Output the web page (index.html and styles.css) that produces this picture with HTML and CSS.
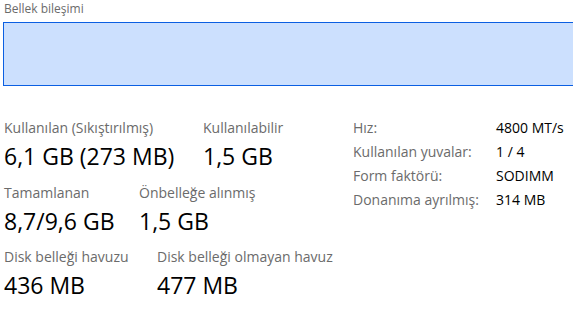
FILE: index.html
```html
<!DOCTYPE html>
<html lang="tr">
<head>
<meta charset="utf-8">
<link rel="stylesheet" href="styles.css">
</head>
<body>
<div class="page">
  <div class="title">Bellek bileşimi</div>
  <div class="bar"></div>
  <div class="details">
    <div class="stats">
      <div class="row">
        <div class="stat c1a"><div class="lbl">Kullanılan (Sıkıştırılmış)</div><div class="val">6,1 GB (273 MB)</div></div>
        <div class="stat"><div class="lbl">Kullanılabilir</div><div class="val">1,5 GB</div></div>
      </div>
      <div class="row">
        <div class="stat c2a"><div class="lbl">Tamamlanan</div><div class="val">8,7/9,6 GB</div></div>
        <div class="stat"><div class="lbl">Önbelleğe alınmış</div><div class="val">1,5 GB</div></div>
      </div>
      <div class="row">
        <div class="stat c3a"><div class="lbl">Disk belleği havuzu</div><div class="val">436 MB</div></div>
        <div class="stat"><div class="lbl">Disk belleği olmayan havuz</div><div class="val">477 MB</div></div>
      </div>
    </div>
    <div class="specs">
      <div class="k">Hız:</div><div class="v">4800 MT/s</div>
      <div class="k">Kullanılan yuvalar:</div><div class="v">1 / 4</div>
      <div class="k">Form faktörü:</div><div class="v">SODIMM</div>
      <div class="k">Donanıma ayrılmış:</div><div class="v">314 MB</div>
    </div>
  </div>
</div>
</body>
</html>
```
FILE: styles.css
```css
html, body {
  margin: 0;
  padding: 0;
  background: #ffffff;
  overflow: hidden;
}
.page {
  width: 573px;
  height: 312px;
  font-family: "Open Sans", "Noto Sans", sans-serif;
  overflow: hidden;
}
.title {
  font-size: 12px;
  line-height: 16px;
  color: #6b6b6b;
  padding: 1px 0 0 4px;
  height: 22px;
  box-sizing: border-box;
}
.bar {
  margin-left: 3px;
  width: 600px;
  height: 64px;
  box-sizing: border-box;
  background: #cce0fe;
  border: 1px solid #0b5fe2;
}
.details {
  display: flex;
  padding: 29px 0 0 4px;
}
.stats {
  width: 349px;
  display: flex;
  flex-direction: column;
  padding-top: 3px;
}
.row {
  display: flex;
  height: 64.5px;
}
.stat .lbl {
  font-size: 14px;
  line-height: 20px;
  color: #6b6b6b;
  white-space: nowrap;
}
.stat .val {
  font-size: 23px;
  line-height: 36px;
  color: #000;
  white-space: nowrap;
}
.c1a { width: 199px; }
.c2a { width: 135px; }
.c3a { width: 153px; }
.specs {
  display: grid;
  grid-template-columns: 143px auto;
  grid-auto-rows: 24px;
  font-size: 14px;
  line-height: 24px;
  padding-top: 1px;
}
.specs .k { color: #6b6b6b; white-space: nowrap; }
.specs .v { color: #000; white-space: nowrap; }
```
